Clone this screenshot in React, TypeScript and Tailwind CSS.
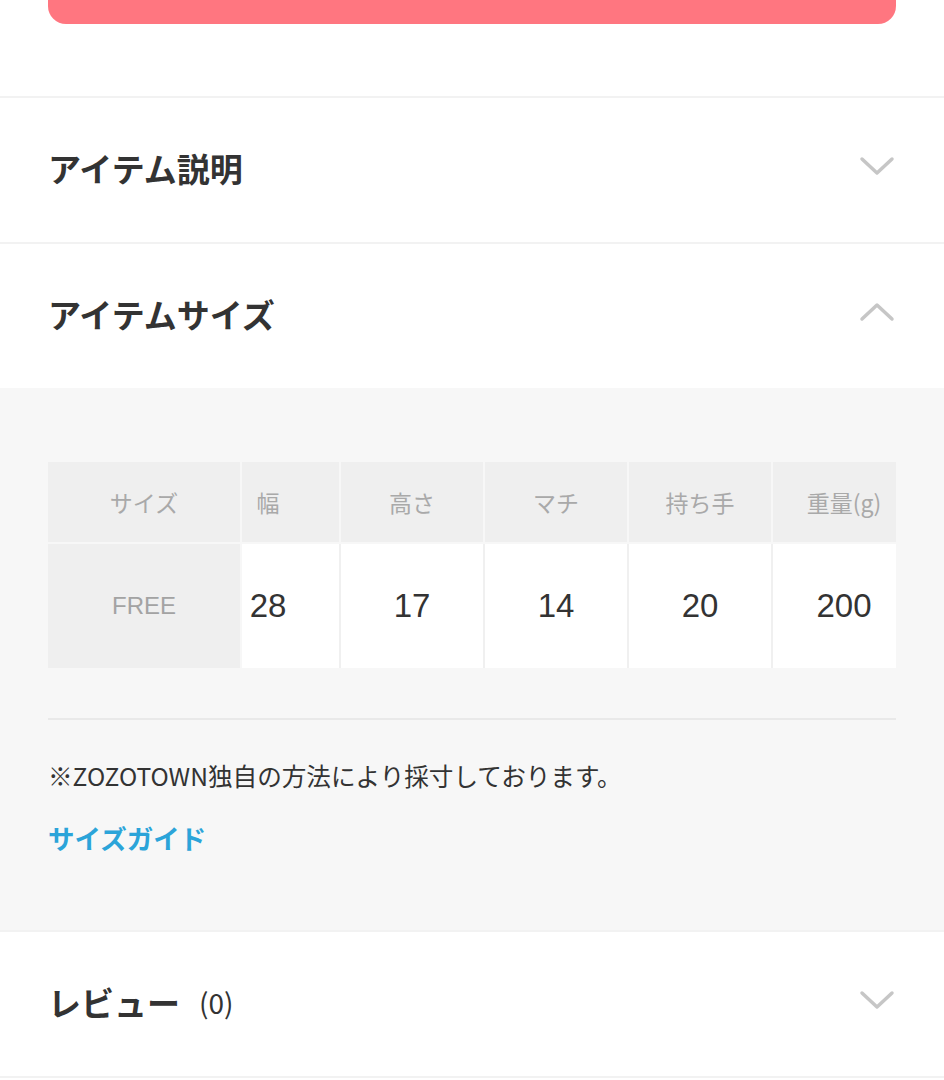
import { useEffect, useRef } from "react";

const jp = "font-['Noto_Sans_CJK_JP','Noto_Sans',sans-serif]";
const num = "font-['Liberation_Sans','Noto_Sans_CJK_JP',sans-serif]";

function Chevron({ up = false }: { up?: boolean }) {
  return (
    <svg width="36" height="20" viewBox="0 0 36 20" fill="none" aria-hidden>
      <polyline
        points={up ? "3,17 18,3 33,17" : "3,3 18,17 33,3"}
        stroke="#c6c6c6"
        strokeWidth="3.5"
        strokeLinecap="round"
        strokeLinejoin="round"
      />
    </svg>
  );
}

function Row({
  title,
  open,
  extra,
}: {
  title: string;
  open?: boolean;
  extra?: string;
}) {
  return (
    <div className="flex h-[144px] items-center justify-between bg-white px-12">
      <h3
        className={`${jp} -mt-1 flex items-center text-[33px] font-bold leading-none text-[#333]`}
      >
        {title}
        {extra && (
          <span className="ml-[19px] text-[28px] font-normal text-[#333]">
            {extra}
          </span>
        )}
      </h3>
      <div className="-mt-2 mr-[1px]">
        <Chevron up={open} />
      </div>
    </div>
  );
}

const heads = ["幅", "高さ", "マチ", "持ち手", "重量(g)"];
const vals = ["28", "17", "14", "20", "200"];

function SizeTable() {
  const ref = useRef<HTMLDivElement>(null);

  useEffect(() => {
    if (ref.current) ref.current.scrollLeft = 45;
  }, []);

  return (
    <div ref={ref} className="w-full overflow-x-auto [scrollbar-width:none]">
      <div className="grid w-max grid-cols-[194px_repeat(5,144px)]">
        <div
          className={`${jp} sticky left-0 z-10 flex h-[82px] items-center justify-center border-r-2 border-b-2 border-[#f7f7f7] bg-[#efefef] text-[23px] text-[#a9a9a9]`}
        >
          サイズ
        </div>
        {heads.map((h) => (
          <div
            key={h}
            className={`${jp} flex h-[82px] items-center justify-center border-r-2 border-b-2 border-[#f7f7f7] bg-[#efefef] text-[23px] text-[#a9a9a9]`}
          >
            {h}
          </div>
        ))}
        <div
          className={`${num} sticky left-0 z-10 flex h-[124px] items-center justify-center border-r-2 border-[#f7f7f7] bg-[#efefef] text-[24px] text-[#a3a3a3]`}
        >
          FREE
        </div>
        {vals.map((v, i) => (
          <div
            key={i}
            className={`${num} flex h-[124px] items-center justify-center border-r-2 border-[#f0f0f0] bg-white text-[33px] text-[#333]`}
          >
            {v}
          </div>
        ))}
      </div>
    </div>
  );
}

export default function App() {
  return (
    <div className="min-h-[1080px] bg-white">
      <div className="px-12">
        <div className="h-6 rounded-b-[18px] bg-[#ff7680]" />
      </div>
      <div className="h-[72px]" />
      <div className="h-[2px] bg-[#f2f2f2]" />
      <Row title="アイテム説明" />
      <div className="h-[2px] bg-[#f2f2f2]" />
      <Row title="アイテムサイズ" open />

      <div className="bg-[#f7f7f7] px-12 pt-[74px] pb-[74px]">
        <SizeTable />
        <div className="mt-[50px] h-[2px] bg-[#e9e9e9]" />
        <p className={`${jp} mt-[37px] text-[24.6px] leading-[36px] text-[#333]`}>
          ※ZOZOTOWN独自の方法により採寸しております。
        </p>
        <a
          href="#"
          className={`${jp} mt-[27px] block text-[26.5px] font-bold leading-[36px] text-[#2ba4d9]`}
        >
          サイズガイド
        </a>
      </div>

      <div className="h-[2px] bg-[#f2f2f2]" />
      <Row title="レビュー" extra="(0)" />
      <div className="h-[2px] bg-[#f2f2f2]" />
    </div>
  );
}
